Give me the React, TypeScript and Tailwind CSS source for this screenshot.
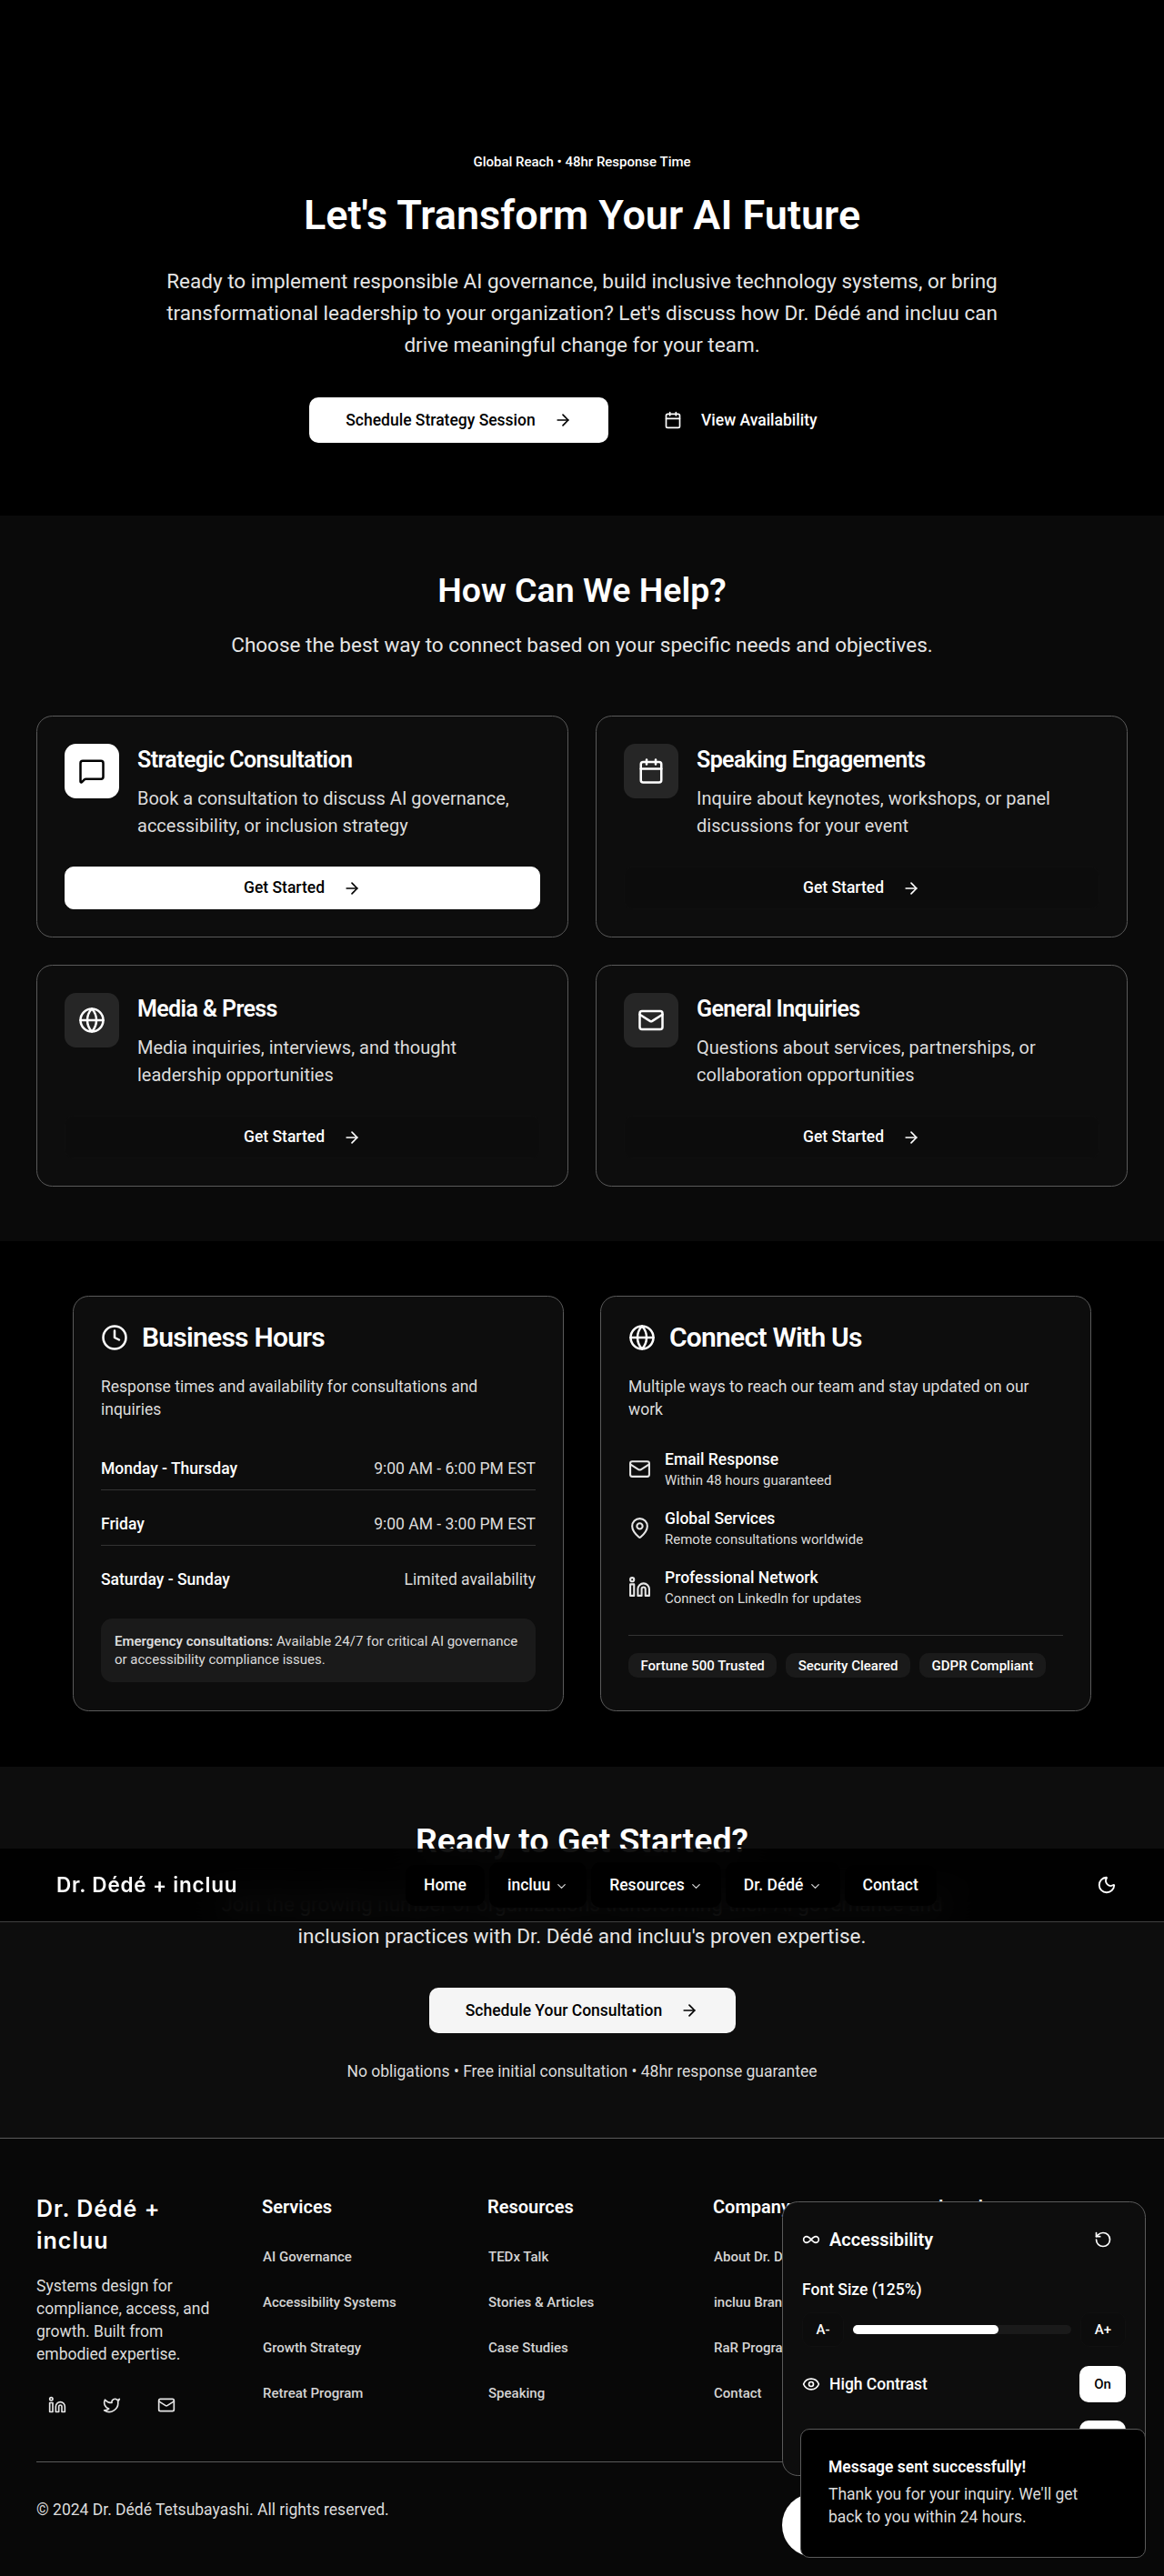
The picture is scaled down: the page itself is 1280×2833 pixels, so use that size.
import { ArrowRight, Calendar, ChevronDown, Clock, Eye, Globe, Infinity as InfinityIcon, Linkedin, Mail, MapPin, MessageSquare, Moon, RotateCcw, Twitter } from "lucide-react";

const font = "font-['Roboto',sans-serif]";
const logoFont = "font-['Inter',sans-serif]";

const helpCards = [
  { icon: MessageSquare, title: "Strategic Consultation", text: "Book a consultation to discuss AI governance, accessibility, or inclusion strategy", primary: true },
  { icon: Calendar, title: "Speaking Engagements", text: "Inquire about keynotes, workshops, or panel discussions for your event" },
  { icon: Globe, title: "Media & Press", text: "Media inquiries, interviews, and thought leadership opportunities" },
  { icon: Mail, title: "General Inquiries", text: "Questions about services, partnerships, or collaboration opportunities" },
];

const hours = [
  { day: "Monday - Thursday", time: "9:00 AM - 6:00 PM EST" },
  { day: "Friday", time: "9:00 AM - 3:00 PM EST" },
  { day: "Saturday - Sunday", time: "Limited availability" },
];

const channels = [
  { icon: Mail, title: "Email Response", text: "Within 48 hours guaranteed" },
  { icon: MapPin, title: "Global Services", text: "Remote consultations worldwide" },
  { icon: Linkedin, title: "Professional Network", text: "Connect on LinkedIn for updates" },
];

const footerCols = [
  { title: "Services", links: ["AI Governance", "Accessibility Systems", "Growth Strategy", "Retreat Program"] },
  { title: "Resources", links: ["TEDx Talk", "Stories & Articles", "Case Studies", "Speaking"] },
  { title: "Company", links: ["About Dr. Dédé", "incluu Brand", "RaR Program", "Contact"] },
  { title: "Legal", links: ["Privacy Policy", "Terms of Service", "Accessibility", "Cookies"] },
];

function NavItem({ label, menu }: { label: string; menu?: boolean }) {
  if (!menu) {
    return <button className="h-[45px] px-5 rounded-[10px] bg-black text-[17.5px] font-medium text-white">{label}</button>;
  }
  return (
    <button className="h-[50px] px-5 rounded-[10px] bg-black text-[17.5px] font-medium text-white flex items-center gap-[5px]">
      {label}
      <ChevronDown size={15} className="mt-[2px] text-[#d4d4d4]" />
    </button>
  );
}

export default function App() {
  return (
    <div className={`${font} relative w-[1280px] h-[2833px] overflow-hidden bg-black text-white`}>
      {/* Hero */}
      <section className="h-[567px] pt-[168px] text-center bg-black">
        <div className="text-[15px] leading-[20px] font-medium">Global Reach • 48hr Response Time</div>
        <h1 className="mt-[24px] text-[45px] leading-[50px] font-semibold">Let's Transform Your AI Future</h1>
        <p className="mt-[30px] mx-auto w-[960px] text-[22.5px] leading-[35px] text-[#e5e5e5]">
          Ready to implement responsible AI governance, build inclusive technology systems, or bring transformational leadership to your organization? Let's discuss how Dr. Dédé and incluu can drive meaningful change for your team.
        </p>
        <div className="mt-10 ml-[340px] flex gap-[21px]">
          <button className="h-[50px] w-[329px] rounded-[10px] bg-white text-black text-[17.5px] font-medium flex items-center justify-center gap-5">
            Schedule Strategy Session
            <ArrowRight size={20} />
          </button>
          <button className="h-[50px] px-[40px] rounded-[10px] text-[17.5px] font-medium flex items-center gap-[21px]">
            <Calendar size={20} />
            View Availability
          </button>
        </div>
      </section>

      {/* Help options */}
      <section className="h-[798px] py-[60px] bg-[#0a0a0a]">
        <h2 className="text-center text-[37.5px] leading-[45px] font-semibold">How Can We Help?</h2>
        <p className="mt-5 text-center text-[22.5px] leading-[35px] text-[#e5e5e5]">Choose the best way to connect based on your specific needs and objectives.</p>
        <div className="mt-[60px] mx-10 grid grid-cols-2 gap-[30px]">
          {helpCards.map((card) => (
            <div key={card.title} className="h-[244px] p-[30px] rounded-[17.5px] border border-[#5a5a5a] bg-[#0d0d0d]">
              <div className="flex gap-5">
                <div className={`w-[60px] h-[60px] shrink-0 rounded-[12.5px] flex items-center justify-center ${card.primary ? "bg-white text-black" : "bg-[#262626] text-white"}`}>
                  <card.icon size={30} />
                </div>
                <div>
                  <h3 className="text-[25px] leading-[35px] font-semibold tracking-[-0.625px]">{card.title}</h3>
                  <p className="mt-[10px] text-[20px] leading-[30px] text-[#dcdcdc]">{card.text}</p>
                </div>
              </div>
              <button className={`mt-[30px] w-full h-[47px] rounded-[10px] border text-[17.5px] font-medium flex items-center justify-center gap-5 ${card.primary ? "bg-white border-white text-black" : "bg-[#0c0c0c] border-[#0f0f0f] text-white"}`}>
                Get Started
                <ArrowRight size={20} />
              </button>
            </div>
          ))}
        </div>
      </section>

      {/* Hours and channels */}
      <section className="h-[578px] py-[60px] bg-black">
        <div className="w-[1120px] mx-auto grid grid-cols-2 gap-10">
          <div className="h-[457px] p-[30px] rounded-[17.5px] border border-[#5a5a5a] bg-[#0d0d0d]">
            <div className="flex items-center gap-[15px]">
              <Clock size={30} />
              <h3 className="text-[30px] leading-[30px] font-semibold tracking-[-0.75px]">Business Hours</h3>
            </div>
            <p className="mt-[27px] text-[17.5px] leading-[25px] text-[#dcdcdc]">Response times and availability for consultations and inquiries</p>
            <div className="mt-10 flex flex-col gap-[25px]">
              {hours.map((row, i) => (
                <div key={row.day} className={`flex justify-between pb-[10px] text-[17.5px] leading-[25px] ${i < 2 ? "border-b border-[#333333]" : ""}`}>
                  <span className="font-medium">{row.day}</span>
                  <span className="text-[#dcdcdc]">{row.time}</span>
                </div>
              ))}
            </div>
            <div className="mt-5 p-[15px] rounded-[12.5px] bg-[#1a1a1a] text-[15px] leading-[20px] text-[#dcdcdc]">
              <strong className="font-semibold">Emergency consultations:</strong> Available 24/7 for critical AI governance or accessibility compliance issues.
            </div>
          </div>

          <div className="h-[457px] p-[30px] rounded-[17.5px] border border-[#5a5a5a] bg-[#0d0d0d]">
            <div className="flex items-center gap-[15px]">
              <Globe size={30} />
              <h3 className="text-[30px] leading-[30px] font-semibold tracking-[-0.75px]">Connect With Us</h3>
            </div>
            <p className="mt-[27px] text-[17.5px] leading-[25px] text-[#dcdcdc]">Multiple ways to reach our team and stay updated on our work</p>
            <div className="mt-[30px] flex flex-col gap-5">
              {channels.map((item) => (
                <div key={item.title} className="flex items-center gap-[15px]">
                  <item.icon size={25} className="text-[#e5e5e5]" />
                  <div>
                    <div className="text-[17.5px] leading-[25px] font-medium">{item.title}</div>
                    <div className="text-[15px] leading-[20px] text-[#dcdcdc]">{item.text}</div>
                  </div>
                </div>
              ))}
            </div>
            <div className="mt-[30px] pt-[19px] border-t border-[#333333] flex gap-[10px]">
              {["Fortune 500 Trusted", "Security Cleared", "GDPR Compliant"].map((badge) => (
                <span key={badge} className="px-[13.5px] py-[3.5px] rounded-[10px] bg-[#1a1a1a] text-[15px] leading-[20px] font-medium">{badge}</span>
              ))}
            </div>
          </div>
        </div>
      </section>

      {/* Closing call to action */}
      <section className="h-[408px] pt-[59px] text-center bg-[#0d0d0d]">
        <h2 className="text-[37.5px] leading-[45px] font-semibold">Ready to Get Started?</h2>
        <p className="mt-[30px] mx-auto w-[840px] text-[22.5px] leading-[35px] text-[#e5e5e5]">
          Join the growing number of organizations transforming their AI governance and inclusion practices with Dr. Dédé and incluu's proven expertise.
        </p>
        <button className="mt-[39px] mx-auto w-[337px] h-[50px] rounded-[10px] bg-[#f5f5f5] text-black text-[17.5px] font-medium flex items-center justify-center gap-5">
          Schedule Your Consultation
          <ArrowRight size={20} />
        </button>
        <p className="mt-[30px] text-[17.5px] leading-[25px] text-[#dcdcdc]">No obligations • Free initial consultation • 48hr response guarantee</p>
      </section>

      {/* Footer */}
      <footer className="h-[482px] px-10 pt-[60px] border-t border-[#5a5a5a] bg-[#080808]">
        <div className="grid grid-cols-5 gap-10 h-[295px]">
          <div>
            <div className={`${logoFont} text-[25px] leading-[35px] font-semibold tracking-[1px]`}>Dr. Dédé + incluu</div>
            <p className="mt-5 text-[17.5px] leading-[25px] text-[#dcdcdc]">Systems design for compliance, access, and growth. Built from embodied expertise.</p>
            <div className="mt-[20px] flex gap-[14px]">
              {[Linkedin, Twitter, Mail].map((Icon, i) => (
                <span key={i} className="w-[46px] h-[46px] flex items-center justify-center text-[#e5e5e5]">
                  <Icon size={20} />
                </span>
              ))}
            </div>
          </div>
          {footerCols.map((col) => (
            <div key={col.title}>
              <h4 className="text-[20px] leading-[30px] font-semibold">{col.title}</h4>
              <ul className="mt-[15px]">
                {col.links.map((link) => (
                  <li key={link} className="h-[50px] pl-px flex items-center text-[15px] font-medium text-[#d4d4d4]">{link}</li>
                ))}
              </ul>
            </div>
          ))}
        </div>
        <div className="border-t border-[#5a5a5a] pt-10 text-[17.5px] leading-[25px] text-[#dcdcdc]">© 2024 Dr. Dédé Tetsubayashi. All rights reserved.</div>
      </footer>

      {/* Fixed navigation, caught mid page by the screenshot */}
      <nav className="absolute left-0 top-[2033px] w-full h-[81px] pl-[62px] pr-[52px] flex items-center justify-between border-b border-[#404040] bg-black/85 backdrop-blur-[16px]">
        <div className={`${logoFont} text-[22.5px] font-semibold tracking-[0.8px]`}>Dr. Dédé + incluu</div>
        <div className="absolute left-[446px] flex items-center gap-[5px]">
          <NavItem label="Home" />
          <NavItem label="incluu" menu />
          <NavItem label="Resources" menu />
          <NavItem label="Dr. Dédé" menu />
          <NavItem label="Contact" />
        </div>
        <Moon size={22} />
      </nav>

      {/* Accessibility panel */}
      <div className="absolute left-[860px] top-[2421px] w-[400px] h-[302px] p-[21px] rounded-[17.5px] border border-[#5a5a5a] bg-[#0d0d0d]">
        <div className="flex items-center justify-between h-[40px]">
          <div className="flex items-center gap-[10px]">
            <InfinityIcon size={20} />
            <span className="text-[20px] font-semibold">Accessibility</span>
          </div>
          <RotateCcw size={20} className="mr-[15px]" />
        </div>
        <div className="mt-[22.5px] text-[17.5px] leading-[25px] font-medium">Font Size (125%)</div>
        <div className="mt-[12.5px] flex items-center gap-[10px]">
          <span className="w-[46px] h-[38px] rounded-[10px] border border-[#101010] bg-[#0c0c0c] flex items-center justify-center text-[15px] font-medium">A-</span>
          <div className="flex-1 h-[10px] rounded-full bg-[#1a1a1a]">
            <div className="w-[160px] h-full rounded-full bg-white" />
          </div>
          <span className="w-[50px] h-[38px] rounded-[10px] border border-[#101010] bg-[#0c0c0c] flex items-center justify-center text-[15px] font-medium">A+</span>
        </div>
        <div className="mt-[21px] flex items-center justify-between">
          <div className="flex items-center gap-[10px]">
            <Eye size={20} />
            <span className="text-[17.5px] font-medium">High Contrast</span>
          </div>
          <span className="w-[51px] h-[40px] rounded-[10px] bg-white text-black flex items-center justify-center text-[15px] font-medium">On</span>
        </div>
        <div className="mt-[20px] flex justify-end">
          <span className="w-[51px] h-[40px] rounded-[10px] bg-white" />
        </div>
      </div>

      {/* Floating button behind the toast */}
      <div className="absolute left-[860px] top-[2742px] w-[70px] h-[70px] rounded-full bg-white" />

      {/* Toast */}
      <div className="absolute left-[880px] top-[2671px] w-[380px] h-[142px] pt-[29px] pl-[30px] pr-[60px] rounded-[10px] border border-[#5a5a5a] bg-black">
        <div className="text-[17.5px] leading-[25px] font-semibold">Message sent successfully!</div>
        <div className="mt-[5px] text-[17.5px] leading-[25px] text-[#dcdcdc]">Thank you for your inquiry. We'll get back to you within 24 hours.</div>
      </div>
    </div>
  );
}
